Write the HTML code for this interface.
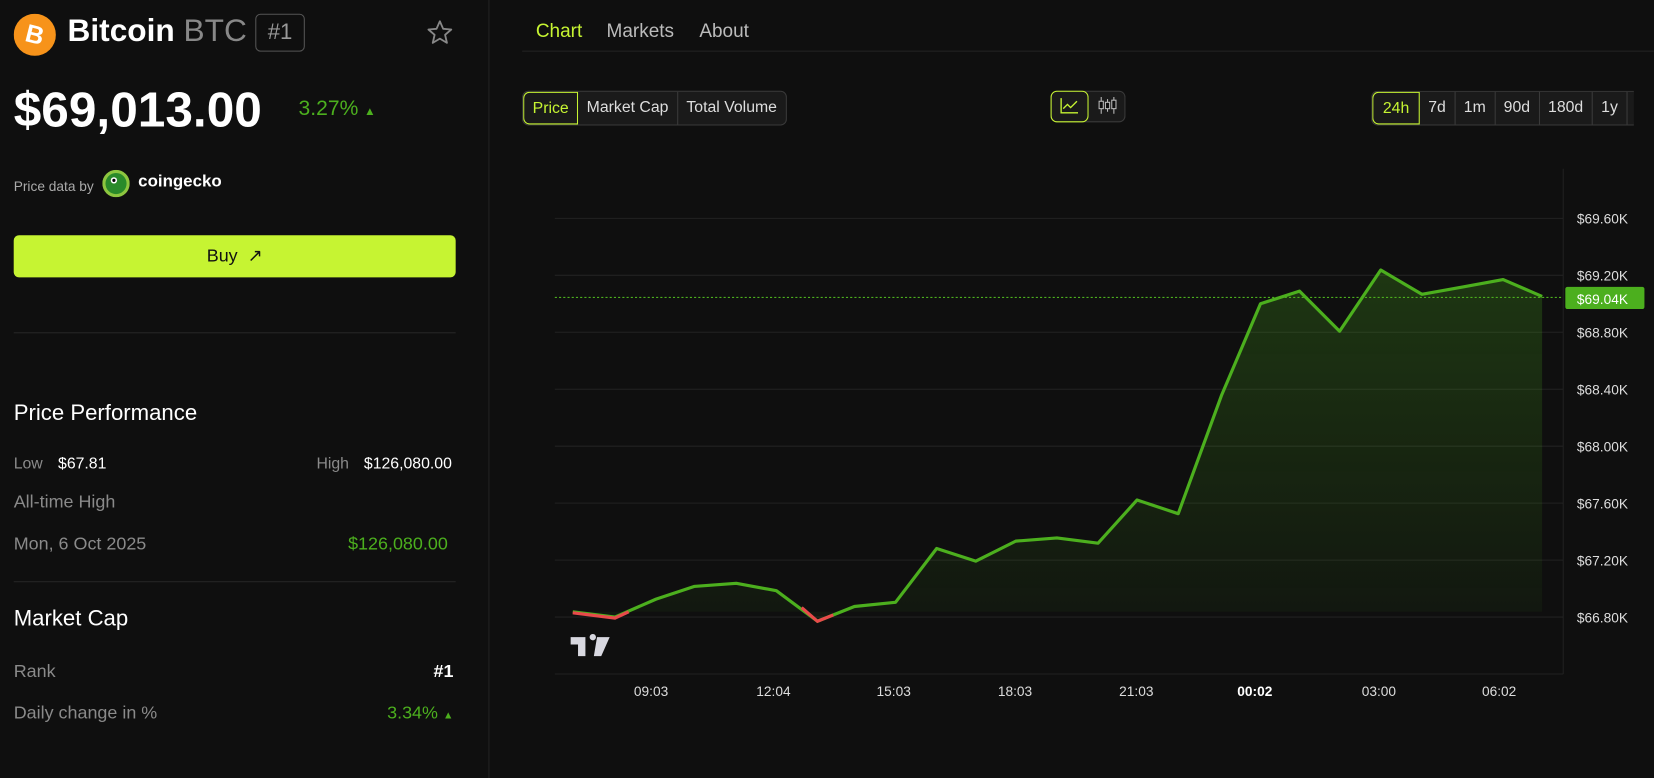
<!DOCTYPE html>
<html><head><meta charset="utf-8"><style>
*{margin:0;padding:0;box-sizing:border-box}
body{width:1654px;height:738px;background:#0f0f0f;font-family:"Liberation Sans",sans-serif;color:#fff;position:relative;overflow:hidden}
#w{position:absolute;left:0;top:0;width:1568px;height:700px;transform:scale(1.0548);transform-origin:0 0}
.a{position:absolute;white-space:nowrap}
.g{color:#8a8a8a}
.gr{color:#4caf1e}
.btn{position:absolute;border:1px solid #3a3a3a;background:#1a1a1a;font-size:15px;color:#ddd;display:flex;border-radius:6px;overflow:hidden}
.btn span{padding:0 8px;line-height:29px;border-right:1px solid #3a3a3a}
.btn span.on{color:#c6f432;border:1px solid #c6f432;border-radius:6px 0 0 6px}
.yl{position:absolute;left:1495px;font-size:13px;color:#ddd}
.xl{position:absolute;top:648px;font-size:13px;color:#ddd}
</style></head><body><div id="w">
<div class="a" style="left:463px;top:0;width:1px;height:738px;background:#222"></div>
<svg class="a" style="left:13px;top:13px" width="40" height="40"><circle cx="20" cy="20" r="20" fill="#f7931a"/><text x="20" y="28" text-anchor="middle" font-size="24" font-weight="bold" fill="#fff" font-family="Liberation Sans" transform="rotate(14 20 20)">B</text></svg>
<div class="a" style="left:64px;top:13px;font-size:30px;font-weight:bold">Bitcoin <span style="font-weight:normal;color:#888">BTC</span></div>
<div class="a" style="left:242px;top:13px;width:47px;height:36px;border:1px solid #555;border-radius:5px;color:#999;font-size:21px;text-align:center;line-height:34px">#1</div>
<svg class="a" style="left:404px;top:18px" width="26" height="26" viewBox="0 0 24 24"><path d="M12 2l2.9 6.6 7.1.6-5.4 4.7 1.6 7-6.2-3.7-6.2 3.7 1.6-7L2 9.2l7.1-.6z" fill="none" stroke="#888" stroke-width="1.6" stroke-linejoin="round"/></svg>
<div class="a" style="left:13px;top:76px;font-size:47px;font-weight:bold">$69,013.00</div>
<div class="a gr" style="left:283px;top:92px;font-size:20px">3.27% <span style="font-size:11px">▲</span></div>
<div class="a" style="left:13px;top:169px;font-size:13px;color:#aaa">Price data by</div>
<svg class="a" style="left:97px;top:161px" width="26" height="26"><circle cx="13" cy="13" r="13" fill="#8dc63f"/><circle cx="13" cy="13" r="10" fill="#2a8a2a"/><circle cx="11" cy="10" r="3" fill="#fff"/><circle cx="11" cy="10" r="1.5" fill="#000"/></svg>
<div class="a" style="left:131px;top:164px;font-size:16px;font-weight:bold">coingecko</div>
<div class="a" style="left:13px;top:223px;width:419px;height:40px;background:#c6f432;border-radius:5px;color:#111;font-size:17px;text-align:center;line-height:40px">Buy &nbsp;↗</div>
<div class="a" style="left:13px;top:315px;width:419px;height:1px;background:#262626"></div>
<div class="a" style="left:13px;top:380px;font-size:21px">Price Performance</div>
<div class="a g" style="left:13px;top:431px;font-size:15px">Low</div>
<div class="a" style="left:55px;top:431px;font-size:15px">$67.81</div>
<div class="a g" style="left:300px;top:431px;font-size:15px">High</div>
<div class="a" style="left:345px;top:431px;font-size:15px">$126,080.00</div>
<div class="a g" style="left:13px;top:466px;font-size:17px">All-time High</div>
<div class="a g" style="left:13px;top:506px;font-size:17px">Mon, 6 Oct 2025</div>
<div class="a gr" style="left:330px;top:506px;font-size:17px">$126,080.00</div>
<div class="a" style="left:13px;top:551px;width:419px;height:1px;background:#262626"></div>
<div class="a" style="left:13px;top:575px;font-size:21px">Market Cap</div>
<div class="a g" style="left:13px;top:627px;font-size:17px">Rank</div>
<div class="a" style="left:411px;top:627px;font-size:17px;font-weight:bold">#1</div>
<div class="a g" style="left:13px;top:666px;font-size:17px">Daily change in %</div>
<div class="a gr" style="left:367px;top:666px;font-size:17px">3.34% <span style="font-size:10px">▲</span></div>

<div class="a" style="left:508px;top:19px;font-size:18px;color:#c6f432">Chart</div>
<div class="a" style="left:575px;top:19px;font-size:18px;color:#bbb">Markets</div>
<div class="a" style="left:663px;top:19px;font-size:18px;color:#bbb">About</div>
<div class="a" style="left:495px;top:48px;width:1073px;height:1px;background:#222"></div>
<div class="btn" style="left:495px;top:86px"><span class="on">Price</span><span>Market Cap</span><span style="border:none">Total Volume</span></div>
<div class="a" style="left:996px;top:86px;width:71px;height:30px;border:1px solid #3a3a3a;border-radius:6px;background:#1a1a1a"></div>
<div class="a" style="left:996px;top:86px;width:36px;height:30px;border:1px solid #c6f432;border-radius:6px"></div>
<svg class="a" style="left:1005px;top:92px" width="18" height="16"><path d="M1 1v14h16M3 11l4-4 3 3 6-6" fill="none" stroke="#c6f432" stroke-width="1.3"/></svg>
<svg class="a" style="left:1040px;top:92px" width="20" height="16"><path d="M4 0v16M10 2v12M16 0v16" stroke="#bbb"/><rect x="2" y="4" width="4" height="7" fill="#0f0f0f" stroke="#bbb"/><rect x="8" y="5" width="4" height="6" fill="#0f0f0f" stroke="#bbb"/><rect x="14" y="3" width="4" height="8" fill="#0f0f0f" stroke="#bbb"/></svg>
<div class="btn" style="left:1300px;top:86px;border-right:none;border-radius:6px 0 0 6px"><span class="on" style="padding:0 9px">24h</span><span>7d</span><span>1m</span><span>90d</span><span>180d</span><span>1y</span><span style="padding:0 3px;border:none"></span></div>

<svg class="a" style="left:0;top:0" width="1568" height="700">
<g stroke="#222" stroke-width="1">
<path d="M526 207H1482M526 261H1482M526 315H1482M526 369H1482M526 423H1482M526 477H1482M526 531H1482M526 585H1482M526 639H1482M1482 160V639"/>
</g>
<defs><linearGradient id="f" x1="0" y1="0" x2="0" y2="1"><stop offset="0" stop-color="#4caf1e" stop-opacity=".25"/><stop offset="1" stop-color="#4caf1e" stop-opacity=".05"/></linearGradient></defs>
<path d="M543 580L583 585L622 568L658 556L698 553L736 560L775 589L810 575L849 571L888 520L925 532L963 513L1002 510L1041 515L1078 474L1117 487L1158 375L1195 288L1232 276L1270 314L1309 256L1348 279L1387 272L1425 265L1462 281V580H543Z" fill="url(#f)"/>
<path d="M526 282H1482" stroke="#4caf1e" stroke-dasharray="2 2"/>
<path d="M543 580L583 585L622 568L658 556L698 553L736 560L775 589L810 575L849 571L888 520L925 532L963 513L1002 510L1041 515L1078 474L1117 487L1158 375L1195 288L1232 276L1270 314L1309 256L1348 279L1387 272L1425 265L1462 281" fill="none" stroke="#4caf1e" stroke-width="3" stroke-linejoin="round"/>
<path d="M543 581L583 586L596 580M760 576L775 589L790 583" fill="none" stroke="#e84a4a" stroke-width="3"/>
<rect x="1484" y="272" width="75" height="21" rx="2" fill="#4caf1e"/>
<text x="1495" y="288" font-size="13" fill="#fff" font-family="Liberation Sans">$69.04K</text>
<path d="M541 604h14v18h-7v-11h-7zM559 604a3 3 0 1 1 0 .1zM566 604h12l-8 18h-7z" fill="#d8d8e0"/>
</svg>
<div class="yl" style="top:200px">$69.60K</div>
<div class="yl" style="top:254px">$69.20K</div>
<div class="yl" style="top:308px">$68.80K</div>
<div class="yl" style="top:362px">$68.40K</div>
<div class="yl" style="top:416px">$68.00K</div>
<div class="yl" style="top:470px">$67.60K</div>
<div class="yl" style="top:524px">$67.20K</div>
<div class="yl" style="top:578px">$66.80K</div>
<div class="xl" style="left:601px">09:03</div>
<div class="xl" style="left:717px">12:04</div>
<div class="xl" style="left:831px">15:03</div>
<div class="xl" style="left:946px">18:03</div>
<div class="xl" style="left:1061px">21:03</div>
<div class="xl" style="left:1173px;font-weight:bold;color:#fff">00:02</div>
<div class="xl" style="left:1291px">03:00</div>
<div class="xl" style="left:1405px">06:02</div>
</div></body></html>
